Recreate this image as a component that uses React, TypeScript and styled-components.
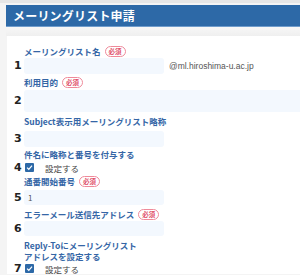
import React from "react";
import styled, { createGlobalStyle } from "styled-components";

const Global = createGlobalStyle`
  html, body { margin: 0; padding: 0; }
  body {
    background: #f4f4f4;
    font-family: "Noto Sans CJK JP", "Noto Sans", sans-serif;
    width: 300px;
    height: 275px;
    overflow: hidden;
  }
`;

const Page = styled.div`
  border-top: 3px solid #e6e6e6;
  padding: 2px 0 0 6px;
`;

const Header = styled.div`
  height: 21px;
  background: #2d69a7;
  border-bottom: 1px solid #6f9ccc;
  display: flex;
  align-items: center;
  padding-left: 7px;
  color: #fff;
  font-weight: 700;
  font-size: 12px;
  letter-spacing: 0.2px;
`;

const Gap = styled.div`
  height: 9px;
  background: linear-gradient(#f7f7f7, #efefef);
`;

const Card = styled.div`
  background: #fff;
  margin-left: 1px;
  padding: 9px 0 0 7px;
`;

const Field = styled.div<{ $mb?: number }>`
  margin-bottom: ${(p) => p.$mb ?? 3}px;
`;

const Label = styled.div<{ $mb?: number }>`
  margin-left: 10px;
  display: flex;
  align-items: center;
  gap: 4px;
  color: #3566a6;
  font-size: 8.5px;
  font-weight: 700;
  line-height: 12px;
  margin-bottom: ${(p) => p.$mb ?? 1}px;
`;

const LabelBlock = styled.div`
  margin-left: 10px;
  color: #3566a6;
  font-size: 8.5px;
  font-weight: 700;
  line-height: 11px;
  margin-bottom: 1px;
`;

const Badge = styled.span`
  display: inline-flex;
  align-items: center;
  height: 9px;
  padding: 0 3px;
  border: 1px solid #ef8a9a;
  border-radius: 6px;
  color: #e0506a;
  font-size: 6.5px;
  font-weight: 700;
  background: #fff;
`;

const Row = styled.div`
  display: flex;
  align-items: center;
`;

const Num = styled.div`
  width: 10px;
  font-size: 11px;
  font-weight: 700;
  color: #222;
  font-family: "DejaVu Sans", sans-serif;
  line-height: 12px;
`;

const Input = styled.div<{ $wide?: boolean; $h?: number }>`
  width: ${(p) => (p.$wide ? "auto" : "140px")};
  flex: ${(p) => (p.$wide ? "1" : "none")};
  height: ${(p) => p.$h ?? 16}px;
  background: #f3f8fe;
  border-radius: ${(p) => (p.$wide ? "3px 0 0 3px" : "3px")};
  font-size: 8px;
  color: #555;
  display: flex;
  align-items: center;
  padding-left: 4px;
  box-sizing: border-box;
`;

const Suffix = styled.span`
  margin-left: 5px;
  font-size: 8.5px;
  color: #555;
  font-family: "Liberation Sans", "Noto Sans", sans-serif;
`;

const Check = styled.span`
  width: 9px;
  height: 9px;
  background: #2d69a7;
  border-radius: 1px;
  display: inline-flex;
  align-items: center;
  justify-content: center;
  margin-left: 1px;
`;

const CheckText = styled.span`
  margin-left: 11px;
  font-size: 8.5px;
  color: #444;
`;

const CheckRow = styled(Row)`
  height: 11px;
`;

const Tick = () => (
  <svg width="7" height="7" viewBox="0 0 10 10">
    <path d="M1.5 5.2 L4 7.6 L8.6 2.4" fill="none" stroke="#fff" strokeWidth="1.8" />
  </svg>
);

export default function App() {
  return (
    <>
      <Global />
      <Page>
        <Header>メーリングリスト申請</Header>
        <Gap />
        <Card>
          <Field $mb={2}>
            <Label>
              メーリングリスト名<Badge>必須</Badge>
            </Label>
            <Row>
              <Num>1</Num>
              <Input />
              <Suffix>@ml.hiroshima-u.ac.jp</Suffix>
            </Row>
          </Field>
          <Field>
            <Label $mb={2}>
              利用目的<Badge>必須</Badge>
            </Label>
            <Row>
              <Num>2</Num>
              <Input $wide $h={22} />
            </Row>
          </Field>
          <Field $mb={1}>
            <Label $mb={4}>Subject表示用メーリングリスト略称</Label>
            <Row>
              <Num>3</Num>
              <Input />
            </Row>
          </Field>
          <Field $mb={2}>
            <Label $mb={2}>件名に略称と番号を付与する</Label>
            <CheckRow>
              <Num>4</Num>
              <Check>
                <Tick />
              </Check>
              <CheckText>設定する</CheckText>
            </CheckRow>
          </Field>
          <Field $mb={3}>
            <Label $mb={3}>
              通番開始番号<Badge>必須</Badge>
            </Label>
            <Row>
              <Num>5</Num>
              <Input $h={15}>1</Input>
            </Row>
          </Field>
          <Field $mb={4}>
            <Label>
              エラーメール送信先アドレス<Badge>必須</Badge>
            </Label>
            <Row>
              <Num>6</Num>
              <Input $h={15} />
            </Row>
          </Field>
          <Field>
            <LabelBlock>
              Reply-Toにメーリングリスト
              <br />
              アドレスを設定する
            </LabelBlock>
            <CheckRow>
              <Num>7</Num>
              <Check>
                <Tick />
              </Check>
              <CheckText>設定する</CheckText>
            </CheckRow>
          </Field>
        </Card>
      </Page>
    </>
  );
}
